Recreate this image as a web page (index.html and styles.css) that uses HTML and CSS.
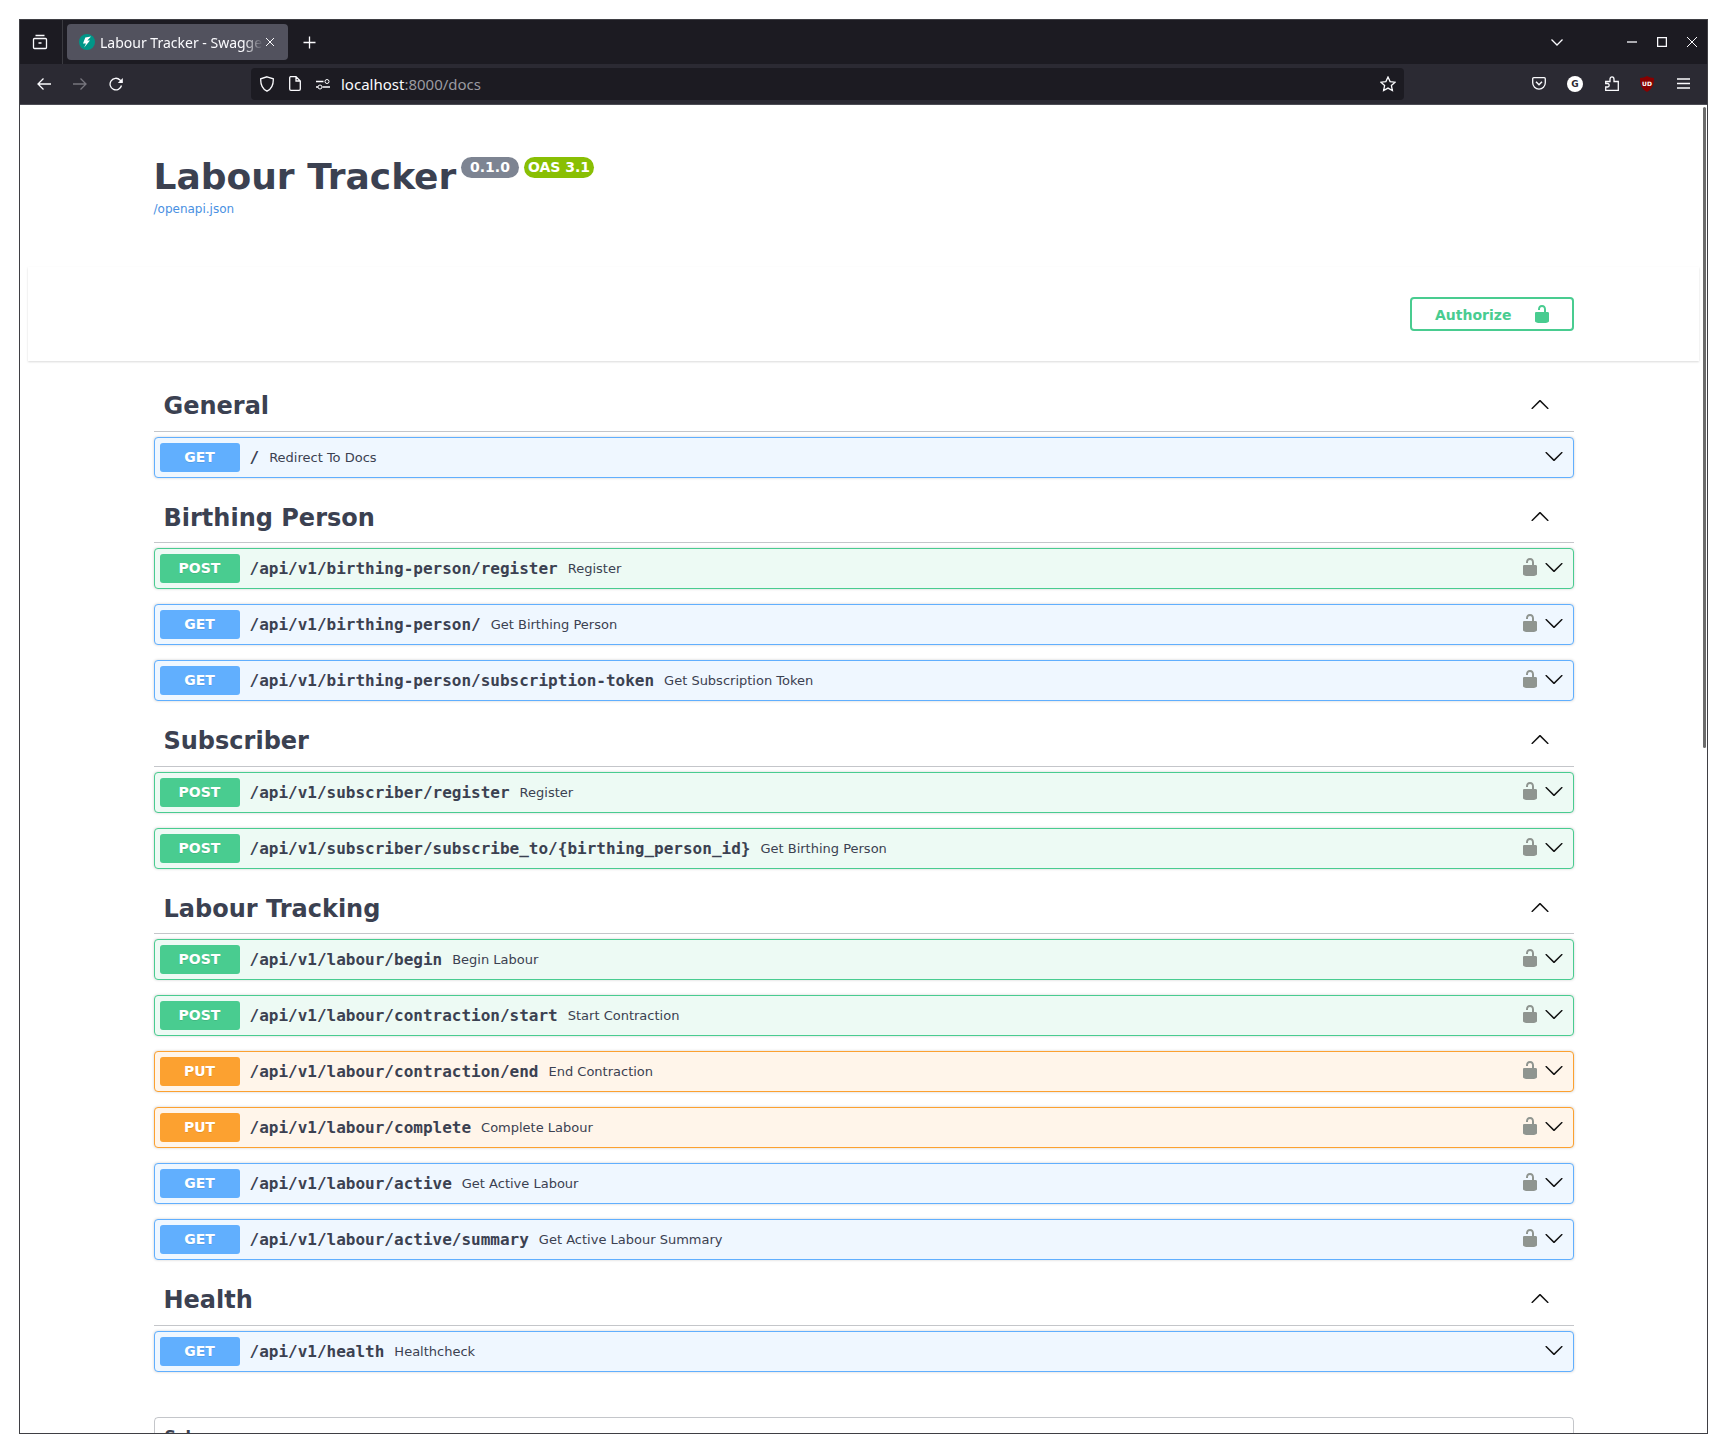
FILE: index.html
```html
<!DOCTYPE html>
<html lang="en">
<head>
    <meta charset="UTF-8">
    <meta name="viewport" content="width=device-width, initial-scale=1.0">
    <title>Labour Tracker - Swagger UI</title>
    <link rel="stylesheet" href="styles.css">
</head>
<body>
    <svg class="defs" width="0" height="0">
        <symbol id="arrow" viewBox="0 0 20 20"><path d="M17.418 6.109c.272-.268.709-.268.979 0s.271.701 0 .969l-7.908 7.83c-.27.268-.707.268-.979 0l-7.908-7.83c-.27-.268-.27-.701 0-.969.271-.268.709-.268.979 0L10 13.25l7.418-7.141z"/></symbol>
        <symbol id="lock" viewBox="0 0 20 20"><path d="M15.8 8H14V5.6C14 2.703 12.665 1 10 1 7.334 1 6 2.703 6 5.6V6h2v-.801C8 3.754 8.797 3 10 3c1.203 0 2 .754 2 2.199V8H4c-.553 0-1 .646-1 1.199V17c0 .549.428 1.139.951 1.307l1.197.387C5.672 18.861 6.55 19 7.1 19h5.8c.549 0 1.428-.139 1.951-.307l1.196-.387c.524-.167.953-.757.953-1.306V9.199C17 8.646 16.352 8 15.8 8z"/></symbol>
    </svg>

    <div class="window">
        <div class="tabbar">
            <div class="tabs-btn">
                <svg class="ico" width="16" height="16" viewBox="0 0 16 16"><path d="M3.5 1.5h9M1.5 5.5a1 1 0 0 1 1-1h11a1 1 0 0 1 1 1v8a1 1 0 0 1-1 1h-11a1 1 0 0 1-1-1zM6.5 9h3"/></svg>
            </div>
            <div class="tab">
                <svg class="favicon" width="16" height="16" viewBox="0 0 16 16"><circle cx="8" cy="8" r="8" fill="#009688"/><path d="M12 2.500 6.300 3.400 4 9.400h3L5.200 13.600 11 6.400H8.300z" fill="#fff"/></svg>
                <span class="tab-title">Labour Tracker - Swagger UI</span>
                <svg class="ico tab-close" width="10" height="10" viewBox="0 0 10 10"><path d="M1 1l8 8M9 1l-8 8"/></svg>
            </div>
            <svg class="ico new-tab" width="13" height="13" viewBox="0 0 13 13"><path d="M6.5 0.5v12M0.5 6.5h12"/></svg>
            <svg class="ico tab-list" width="12" height="7" viewBox="0 0 12 7"><path d="M0.5 0.5 6 6 11.5 0.5"/></svg>
            <svg class="ico win-min" width="10" height="10" viewBox="0 0 10 10"><path d="M0 5h10"/></svg>
            <svg class="ico win-max" width="10" height="10" viewBox="0 0 10 10"><path d="M.5.5h9v9h-9z"/></svg>
            <svg class="ico win-close" width="10" height="10" viewBox="0 0 10 10"><path d="M0 0l10 10M10 0 0 10"/></svg>
        </div>

        <div class="toolbar">
            <svg class="ico nav-back" width="14" height="14" viewBox="0 0 14 14"><path d="M14 7H1M6.5 1.5 1 7l5.5 5.5"/></svg>
            <svg class="ico nav-forward" width="14" height="14" viewBox="0 0 14 14"><path d="M0 7h13M7.500 1.500 13 7l-5.500 5.500"/></svg>
            <svg class="ico nav-reload" width="14" height="14" viewBox="0 0 14 14"><path d="M12.500 8.500a5.800 5.800 0 1 1-1.500-5.500l2 2"/><path class="solid" d="M13.800 1v5h-5z"/></svg>
            <div class="urlbar">
                <svg class="ico" width="14" height="16" viewBox="0 0 14 16"><path d="M7 .8 13.300 2.800c.2 5.500-1.500 10-6.300 12.400C2.200 12.800.5 8.300.7 2.800z"/></svg>
                <svg class="ico url-page" width="12" height="15" viewBox="0 0 12 15"><path d="M1.500.7h5.500L11.300 5v8a1.300 1.300 0 0 1-1.300 1.300H2A1.300 1.300 0 0 1 .7 13V2A1.300 1.300 0 0 1 1.500.7zM7 .7V5h4.300"/></svg>
                <svg class="ico url-perm" width="14" height="12" viewBox="0 0 14 12"><path d="M0 3.500h7.500M0 9h2M6.500 9H14"/><circle cx="11" cy="3.500" r="2"/><circle cx="4" cy="9" r="2"/></svg>
                <div class="url"><span class="url-host">localhost</span>:8000/docs</div>
                <svg class="ico url-star" width="16" height="16" viewBox="0 0 16 16"><path d="M8 1l2.100 4.600 5 .6-3.700 3.400 1 5L8 12.100l-4.400 2.500 1-5L.9 6.200l5-.6z"/></svg>
            </div>
            <div class="tool-icons">
                <svg class="ico" width="14" height="13" viewBox="0 0 14 13"><path d="M1.800.7h10.400c.6 0 1.100.5 1.100 1.100v4a6.300 6.300 0 0 1-12.600 0v-4C.7 1.200 1.200.7 1.800.7z"/><path d="M4 4.800 7 7.800l3-3" stroke-width="1.500"/></svg>
                <svg class="tool-g" width="16" height="16" viewBox="0 0 16 16"><circle cx="8" cy="8" r="8" fill="#fff"/><text x="8" y="11.300" text-anchor="middle">G</text></svg>
                <svg class="ico tool-ext" width="14" height="15" viewBox="0 0 14 15"><path d="M5 5.500V3.200c0-3 4-3 4 0v2.300h4.300v9H.7v-3.500h2c2 0 2-3.500 0-3.500h-2V5.500z"/></svg>
                <svg class="tool-ublock" width="14" height="16" viewBox="0 0 14 16"><path d="M7 0c2 1.300 4.500 1.800 7 2 0 6-1.500 11-7 14C1.500 13 0 8 0 2c2.500-.2 5-.7 7-2z" fill="#800"/><text x="7" y="9.500" text-anchor="middle">UD</text></svg>
                <svg class="ico tool-menu" width="13" height="11" viewBox="0 0 13 11"><path d="M0 1h13M0 5.500h13M0 10h13"/></svg>
            </div>
        </div>

        <div class="page">
            <div class="scrollbar"></div>

            <div class="wrapper">
                <div class="info">
                    <div class="title">
                        <h2>Labour Tracker</h2>
                        <span class="pill pill-version">0.1.0</span>
                        <span class="pill pill-oas">OAS 3.1</span>
                    </div>
                    <a class="spec-link" href="#">/openapi.json</a>
                </div>
            </div>

            <div class="schemes">
                <button class="authorize">
                    <span>Authorize</span>
                    <svg width="20" height="20"><use href="#lock"/></svg>
                </button>
            </div>

            <div class="wrapper">
                <div class="tag">
                    <h3>General <svg class="tag-arrow" width="20" height="20"><use href="#arrow"/></svg></h3>
                    <div class="op get">
                        <span class="method">GET</span><span class="path">/</span><span class="desc">Redirect To Docs</span>
                        <svg class="op-arrow" width="20" height="20"><use href="#arrow"/></svg>
                    </div>
                </div>

                <div class="tag">
                    <h3>Birthing Person <svg class="tag-arrow" width="20" height="20"><use href="#arrow"/></svg></h3>
                    <div class="op post">
                        <span class="method">POST</span><span class="path">/api/v1/birthing-person/register</span><span class="desc">Register</span>
                        <svg class="op-lock" width="20" height="20"><use href="#lock"/></svg>
                        <svg class="op-arrow" width="20" height="20"><use href="#arrow"/></svg>
                    </div>
                    <div class="op get">
                        <span class="method">GET</span><span class="path">/api/v1/birthing-person/</span><span class="desc">Get Birthing Person</span>
                        <svg class="op-lock" width="20" height="20"><use href="#lock"/></svg>
                        <svg class="op-arrow" width="20" height="20"><use href="#arrow"/></svg>
                    </div>
                    <div class="op get">
                        <span class="method">GET</span><span class="path">/api/v1/birthing-person/subscription-token</span><span class="desc">Get Subscription Token</span>
                        <svg class="op-lock" width="20" height="20"><use href="#lock"/></svg>
                        <svg class="op-arrow" width="20" height="20"><use href="#arrow"/></svg>
                    </div>
                </div>

                <div class="tag">
                    <h3>Subscriber <svg class="tag-arrow" width="20" height="20"><use href="#arrow"/></svg></h3>
                    <div class="op post">
                        <span class="method">POST</span><span class="path">/api/v1/subscriber/register</span><span class="desc">Register</span>
                        <svg class="op-lock" width="20" height="20"><use href="#lock"/></svg>
                        <svg class="op-arrow" width="20" height="20"><use href="#arrow"/></svg>
                    </div>
                    <div class="op post">
                        <span class="method">POST</span><span class="path">/api/v1/subscriber/subscribe_to/{birthing_person_id}</span><span class="desc">Get Birthing Person</span>
                        <svg class="op-lock" width="20" height="20"><use href="#lock"/></svg>
                        <svg class="op-arrow" width="20" height="20"><use href="#arrow"/></svg>
                    </div>
                </div>

                <div class="tag">
                    <h3>Labour Tracking <svg class="tag-arrow" width="20" height="20"><use href="#arrow"/></svg></h3>
                    <div class="op post">
                        <span class="method">POST</span><span class="path">/api/v1/labour/begin</span><span class="desc">Begin Labour</span>
                        <svg class="op-lock" width="20" height="20"><use href="#lock"/></svg>
                        <svg class="op-arrow" width="20" height="20"><use href="#arrow"/></svg>
                    </div>
                    <div class="op post">
                        <span class="method">POST</span><span class="path">/api/v1/labour/contraction/start</span><span class="desc">Start Contraction</span>
                        <svg class="op-lock" width="20" height="20"><use href="#lock"/></svg>
                        <svg class="op-arrow" width="20" height="20"><use href="#arrow"/></svg>
                    </div>
                    <div class="op put">
                        <span class="method">PUT</span><span class="path">/api/v1/labour/contraction/end</span><span class="desc">End Contraction</span>
                        <svg class="op-lock" width="20" height="20"><use href="#lock"/></svg>
                        <svg class="op-arrow" width="20" height="20"><use href="#arrow"/></svg>
                    </div>
                    <div class="op put">
                        <span class="method">PUT</span><span class="path">/api/v1/labour/complete</span><span class="desc">Complete Labour</span>
                        <svg class="op-lock" width="20" height="20"><use href="#lock"/></svg>
                        <svg class="op-arrow" width="20" height="20"><use href="#arrow"/></svg>
                    </div>
                    <div class="op get">
                        <span class="method">GET</span><span class="path">/api/v1/labour/active</span><span class="desc">Get Active Labour</span>
                        <svg class="op-lock" width="20" height="20"><use href="#lock"/></svg>
                        <svg class="op-arrow" width="20" height="20"><use href="#arrow"/></svg>
                    </div>
                    <div class="op get">
                        <span class="method">GET</span><span class="path">/api/v1/labour/active/summary</span><span class="desc">Get Active Labour Summary</span>
                        <svg class="op-lock" width="20" height="20"><use href="#lock"/></svg>
                        <svg class="op-arrow" width="20" height="20"><use href="#arrow"/></svg>
                    </div>
                </div>

                <div class="tag">
                    <h3>Health <svg class="tag-arrow" width="20" height="20"><use href="#arrow"/></svg></h3>
                    <div class="op get">
                        <span class="method">GET</span><span class="path">/api/v1/health</span><span class="desc">Healthcheck</span>
                        <svg class="op-arrow" width="20" height="20"><use href="#arrow"/></svg>
                    </div>
                </div>

                <div class="models">
                    <h4>Schemas</h4>
                </div>
            </div>
        </div>
    </div>
</body>
</html>
```

FILE: styles.css
```css
/* page and browser frame */
html, body {
    margin: 0;
    padding: 0;
    background: #fff;
}

.defs {
    display: block;
    height: 0;
}

.window {
    box-sizing: border-box;
    width: 1689px;
    height: 1415px;
    margin: 19px 0 0 19px;
    border: 1px solid #3f3f44;
    display: flex;
    flex-direction: column;
    overflow: hidden;
}

.ico {
    fill: none;
    stroke: #fbfbfe;
    stroke-width: 1.3;
    flex: none;
}

.ico circle {
    stroke-width: 1;
}

.ico .solid {
    fill: #fbfbfe;
    stroke: none;
}

/* tab strip */
.tabbar {
    height: 44px;
    flex: none;
    background: #1c1b22;
    display: flex;
    align-items: center;
}

.tabs-btn {
    box-sizing: border-box;
    width: 43px;
    height: 44px;
    padding-left: 12px;
    border-right: 1px solid #3a3a40;
    display: flex;
    align-items: center;
}

.tab {
    box-sizing: border-box;
    width: 221px;
    height: 36px;
    margin-left: 4px;
    padding: 0 12px;
    background: #52525e;
    border-radius: 4px;
    display: flex;
    align-items: center;
    position: relative;
}

.favicon {
    flex: none;
}

.tab-title {
    margin-left: 5px;
    width: 163px;
    overflow: hidden;
    white-space: nowrap;
    color: #fbfbfe;
    font: 14px "Noto Sans", sans-serif;
    -webkit-mask-image: linear-gradient(to right, #000 88%, transparent 100%);
    mask-image: linear-gradient(to right, #000 88%, transparent 100%);
}

.tab-close {
    margin-left: 2px;
    stroke-width: 1;
}

.new-tab {
    margin-left: 15px;
}

.tab-list {
    margin-left: 1235px;
}

.win-min {
    margin-left: 64px;
}

.win-max {
    margin-left: 20px;
    stroke-width: 1.500;
}

.win-close {
    margin-left: 20px;
    stroke-width: 1;
}

/* nav toolbar */
.toolbar {
    box-sizing: border-box;
    height: 41px;
    flex: none;
    padding-bottom: 1px;
    background: #2b2a33;
    border-bottom: 1px solid #4c4c54;
    display: flex;
    align-items: center;
}

.nav-back {
    margin-left: 17px;
}

.nav-forward {
    margin-left: 22px;
    stroke: #77767e;
}

.nav-reload {
    margin-left: 22px;
}

.urlbar {
    box-sizing: border-box;
    width: 1153px;
    height: 32px;
    margin-left: 128px;
    padding: 0 8px 0 9px;
    background: #1c1b22;
    border-radius: 4px;
    display: flex;
    align-items: center;
}

.url-page {
    margin-left: 15px;
}

.url-perm {
    margin-left: 15px;
}

.url {
    margin-left: 11px;
    flex: 1;
    color: #9a9aa1;
    font: 15px "Noto Sans", sans-serif;
}

.url-host {
    color: #fbfbfe;
}

.tool-icons {
    margin-left: 128px;
    display: flex;
    align-items: center;
    gap: 21px;
}

.tool-ext {
    margin-left: 1px;
}

.tool-menu {
    margin-left: 2px;
}

.tool-g text {
    font: bold 9px "DejaVu Sans", sans-serif;
    fill: #2b2a33;
}

.tool-ublock text {
    font: bold 6px "DejaVu Sans", sans-serif;
    fill: #fff;
}

/* swagger content */
.page {
    flex: 1;
    min-height: 0;
    overflow: hidden;
    position: relative;
    background: #fff;
    color: #3b4151;
    font-family: "DejaVu Sans", sans-serif;
}

.scrollbar {
    position: absolute;
    top: 2px;
    right: 1px;
    width: 3px;
    height: 641px;
    background: #6b6b6b;
    border-radius: 2px;
}

.wrapper {
    width: 1420.5px;
    margin-left: 133.5px;
}

.info {
    padding-top: 51px;
    height: 111px;
}

.title {
    display: flex;
    align-items: flex-start;
}

.title h2 {
    margin: 0;
    font-size: 36px;
    font-weight: bold;
    line-height: 42px;
    width: 307.5px;
    white-space: nowrap;
}

.pill {
    height: 21px;
    margin-top: 1px;
    line-height: 20px;
    border-radius: 57px;
    color: #fff;
    font-size: 14px;
    font-weight: bold;
    text-align: center;
}

.pill-version {
    width: 58px;
    background: #7d8492;
}

.pill-oas {
    width: 70px;
    margin-left: 5px;
    background: #89bf04;
}

.spec-link {
    display: block;
    margin-top: 3px;
    color: #4990e2;
    font-size: 12px;
    line-height: 16px;
    text-decoration: none;
}

.schemes {
    box-sizing: border-box;
    width: 1671px;
    height: 94px;
    margin: 0 0 20px 8px;
    padding: 30px 125px 30px 0;
    background: #fff;
    box-shadow: 0 1px 2px 0 rgba(0, 0, 0, 0.15);
    display: flex;
    justify-content: flex-end;
}

.authorize {
    box-sizing: border-box;
    width: 164px;
    height: 34px;
    padding: 1px 0 0 23px;
    background: transparent;
    border: 2px solid #49cc90;
    border-radius: 4px;
    color: #49cc90;
    font: bold 14px "DejaVu Sans", sans-serif;
    display: flex;
    align-items: center;
    gap: 21px;
}

.authorize svg {
    fill: #49cc90;
    margin-top: -1px;
}

.tag h3 {
    box-sizing: border-box;
    height: 50.5px;
    margin: 0 0 5px;
    padding: 1px 24px 0 10px;
    border-bottom: 1px solid rgba(59, 65, 81, 0.3);
    font-size: 24px;
    font-weight: bold;
    line-height: 46px;
    display: flex;
    align-items: center;
    justify-content: space-between;
}

.tag-arrow {
    transform: rotate(180deg);
    margin-bottom: 2px;
    fill: #111;
}

.op {
    box-sizing: border-box;
    height: 41px;
    margin-bottom: 15px;
    padding: 0 9px 0 5px;
    border: 1px solid;
    border-radius: 4px;
    box-shadow: 0 0 3px rgba(0, 0, 0, 0.19);
    display: flex;
    align-items: center;
}

.op.get {
    background: #eff7ff;
    border-color: #61affe;
}

.op.post {
    background: #edfaf4;
    border-color: #49cc90;
}

.op.put {
    background: #fff5ea;
    border-color: #fca130;
}

.method {
    width: 80px;
    height: 29px;
    flex: none;
    border-radius: 3px;
    color: #fff;
    font-size: 14px;
    font-weight: bold;
    line-height: 28px;
    text-align: center;
    text-shadow: 0 1px 0 rgba(0, 0, 0, 0.1);
}

.get .method {
    background: #61affe;
}

.post .method {
    background: #49cc90;
}

.put .method {
    background: #fca130;
}

.path {
    padding: 0 10px;
    font-family: "DejaVu Sans Mono", monospace;
    font-size: 16px;
    font-weight: bold;
    white-space: nowrap;
}

.desc {
    flex: 1;
    font-size: 13px;
}

.op-lock {
    fill: #8f9590;
    margin-right: 4px;
    margin-bottom: 3px;
}

.op-arrow {
    fill: #111;
    margin-bottom: 3px;
}

.models {
    margin-top: 45px;
    padding: 9px 10px;
    height: 80px;
    border: 1px solid rgba(59, 65, 81, 0.3);
    border-radius: 4px;
}

.models h4 {
    margin: 0;
    font-size: 16px;
    font-weight: bold;
    line-height: 20px;
}
```
